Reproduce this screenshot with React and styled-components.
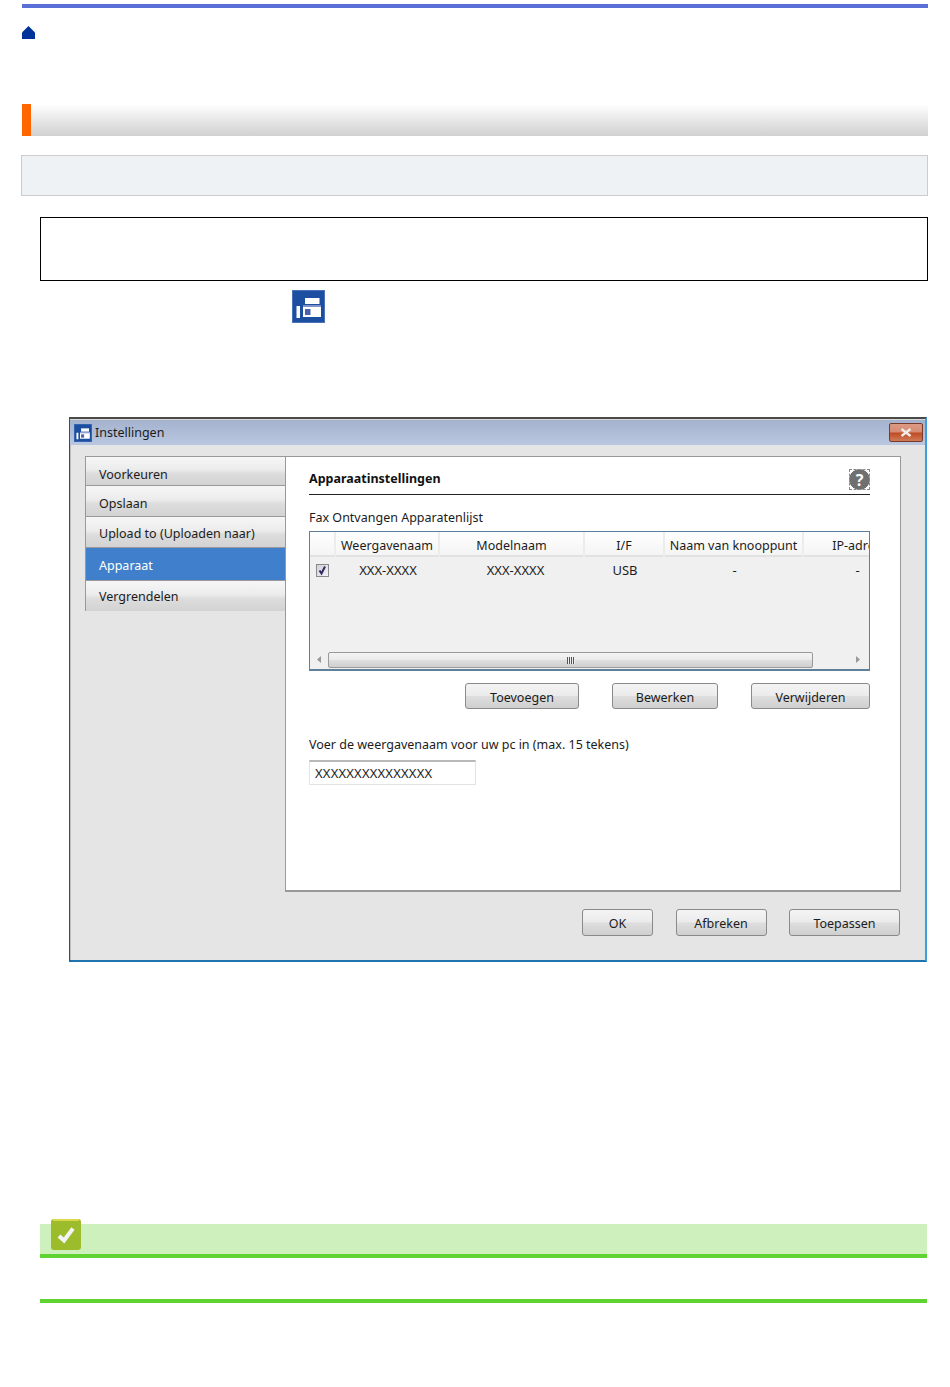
import React from 'react';
import styled, { createGlobalStyle } from 'styled-components';

const GlobalStyle = createGlobalStyle`
  html, body {
    margin: 0;
    padding: 0;
    background: #fff;
  }
  body {
    font-family: "Noto Sans", "Liberation Sans", sans-serif;
    font-size: 12.5px;
    color: #1c1c1c;
  }
`;

const COLUMNS = '26px 104px 145px 80px 139px 107px';
const AERO = 'linear-gradient(#f4f4f4, #ebebeb 48%, #dedede 52%, #cfcfcf)';

const Page = styled.div`
  width: 906px;
  min-height: 1383px;
  padding: 4px 22px 0;
`;

const TopBar = styled.div`
  height: 4px;
  background: #5b6fd8;
`;

const HomeLink = styled.a`
  display: block;
  width: 13px;
  height: 13px;
  margin-top: 18px;
  svg { display: block; }
`;

const Heading = styled.div`
  height: 32px;
  margin-top: 65px;
  border-left: 9px solid #ff6600;
  background: linear-gradient(#fff, #f1f1f1 30%, #d0d0d0);
`;

const Intro = styled.div`
  height: 39px;
  margin: 19px 0 0 -1px;
  border: 1px solid #ccc;
  background: #eff2f5;
`;

const Notice = styled.div`
  height: 62px;
  margin: 21px 0 0 18px;
  border: 1px solid #000;
`;

const StepIcon = styled.div`
  width: 33px;
  height: 33px;
  margin: 9px 0 0 270px;
  svg { display: block; }
`;

const Dialog = styled.div`
  box-sizing: border-box;
  display: flex;
  flex-direction: column;
  width: 858px;
  height: 545px;
  margin: 94px 0 0 47px;
  border-top: 2px solid #4a4a48;
  border-left: 1px solid #4a4a4a;
  border-right: 2px solid #3f9fdc;
  border-bottom: 2px solid #1f74ad;
  background: #e5e5e5;
`;

const TitleBar = styled.div`
  display: flex;
  align-items: center;
  flex: none;
  height: 25px;
  padding: 0 2px 0 4px;
  border-top: 1px solid #d8d8d8;
  background: linear-gradient(#a4b2ce, #b9c7e0);
`;

const TitleIcon = styled.div`
  width: 18px;
  height: 18px;
  svg { display: block; }
`;

const TitleText = styled.span`
  margin-left: 3px;
  flex: 1;
  line-height: 16px;
`;

const CloseButton = styled.div`
  box-sizing: border-box;
  display: flex;
  align-items: center;
  justify-content: center;
  width: 34px;
  height: 19px;
  border: 1px solid #7a3a2a;
  border-radius: 2px;
  background: linear-gradient(#dc9a84, #d58c73 48%, #bd4a22 52%, #cf7b58);
  svg { display: block; }
`;

const DialogBody = styled.div`
  flex: 1;
  padding: 11px 24px 0 14px;
  border-left: 1px solid #bdbdbd;
`;

const MainRow = styled.div`
  display: flex;
  height: 436px;
`;

const Sidebar = styled.div`
  box-sizing: border-box;
  flex: none;
  width: 200px;
  height: 155px;
  border: 1px solid #999;
  border-right: none;
`;

const SideItem = styled.div`
  box-sizing: border-box;
  height: ${(p) => p.$height}px;
  padding: ${(p) => p.$top}px 0 0 13px;
  line-height: 16px;
  white-space: nowrap;
  border-bottom: ${(p) => (p.$last ? 'none' : '1px solid #999')};
  background: ${(p) => (p.$active ? '#3f7fcb' : 'linear-gradient(#f6f6f6, #ececec 45%, #dcdcdc 60%, #d3d3d3)')};
  color: ${(p) => (p.$active ? '#fff' : '#1c1c1c')};
`;

const Panel = styled.div`
  box-sizing: border-box;
  flex: 1;
  min-width: 0;
  padding: 0 30px 0 23px;
  background: #fff;
  border: 1px solid #999;
  border-bottom-width: 2px;
`;

const PanelHeader = styled.div`
  box-sizing: border-box;
  display: flex;
  align-items: center;
  justify-content: space-between;
  height: 38px;
  padding-top: 8px;
  border-bottom: 1px solid #222;
`;

const PanelTitle = styled.span`
  margin-bottom: 2px;
  font-weight: 700;
  color: #111;
`;

const HelpIcon = styled.div`
  box-sizing: border-box;
  display: flex;
  align-items: center;
  justify-content: center;
  width: 21px;
  height: 21px;
  background: radial-gradient(circle closest-side, #707070 96%, transparent);
  outline: 1px dashed #8a8a8a;
  outline-offset: -1px;
  color: #fff;
  font-size: 16px;
  font-weight: 700;
  line-height: 1;
`;

const FieldLabel = styled.div`
  margin-top: ${(p) => p.$top}px;
  line-height: 16px;
`;

const DeviceList = styled.div`
  box-sizing: border-box;
  display: flex;
  flex-direction: column;
  height: 140px;
  margin-top: 5px;
  border: 1px solid #5f7f9a;
  border-bottom-width: 2px;
  overflow: hidden;
`;

const ListHead = styled.div`
  box-sizing: border-box;
  display: grid;
  grid-template-columns: ${COLUMNS};
  height: 25px;
  flex: none;
  background: linear-gradient(#fff, #f4f4f4);
  border-bottom: 2px solid #e2e2e2;
`;

const HeadCell = styled.div`
  box-sizing: border-box;
  padding-top: 1px;
  text-align: center;
  white-space: nowrap;
  line-height: 25px;
  border-right: 2px solid #ececec;
`;

const ListBody = styled.div`
  flex: 1;
  background: #f0f0f0;
`;

const ListRow = styled.div`
  display: grid;
  grid-template-columns: ${COLUMNS};
  height: 26px;
  align-items: center;
`;

const RowCell = styled.div`
  padding-left: ${(p) => p.$shift || 0}px;
  text-align: center;
  white-space: nowrap;
  font-size: 13px;
`;

const CheckBox = styled.div`
  box-sizing: border-box;
  width: 13px;
  height: 13px;
  margin-left: 6px;
  border: 1px solid #8a8a8a;
  background: linear-gradient(135deg, #d0d0dc, #f2f2f6);
  svg { display: block; }
`;

const ScrollBar = styled.div`
  display: flex;
  align-items: flex-start;
  height: 17px;
  flex: none;
  background: #f0f0f0;
`;

const ScrollArrow = styled.div`
  box-sizing: border-box;
  display: flex;
  align-items: center;
  justify-content: ${(p) => (p.$end ? 'flex-end' : 'center')};
  width: ${(p) => p.$width}px;
  height: 15px;
  padding-right: ${(p) => (p.$end ? 8 : 0)}px;
  svg { display: block; }
`;

const ScrollThumb = styled.div`
  box-sizing: border-box;
  display: flex;
  align-items: center;
  justify-content: center;
  width: 485px;
  height: 16px;
  border: 1px solid #9a9a9a;
  border-radius: 2px;
  background: ${AERO};
`;

const Grip = styled.div`
  width: 8px;
  height: 7px;
  background: repeating-linear-gradient(90deg, #555 0 1px, #eee 1px 2px);
`;

const ActionRow = styled.div`
  display: flex;
  justify-content: flex-end;
  gap: 33px;
  margin-top: 12px;
`;

const Button = styled.div`
  box-sizing: border-box;
  display: flex;
  align-items: center;
  justify-content: center;
  width: ${(p) => p.$width}px;
  height: ${(p) => p.$height}px;
  padding-top: 2px;
  border: 1px solid #8a8a8a;
  border-radius: 3px;
  background: ${AERO};
`;

const NameInput = styled.div`
  box-sizing: border-box;
  width: 167px;
  height: 25px;
  margin-top: 7px;
  padding-left: 5px;
  font-size: 13px;
  letter-spacing: 0.2px;
  line-height: 23px;
  border: 1px solid #e3e3e3;
  border-top: 2px solid #b8b8b8;
`;

const DialogFooter = styled.div`
  display: flex;
  justify-content: flex-end;
  gap: 22.5px;
  padding: 17px 1px 0 0;
`;

const NoteBar = styled.div`
  position: relative;
  width: 887px;
  height: 30px;
  margin: 262px 0 0 18px;
  background: #cdf0bd;
  border-bottom: 4px solid #5fd331;
`;

const NoteBadge = styled.div`
  position: absolute;
  left: 10px;
  top: -5px;
  svg { display: block; }
`;

const NoteEnd = styled.div`
  width: 887px;
  height: 4px;
  margin: 41px 0 0 18px;
  background: #5fd331;
`;

const PrinterGlyph = () => (
  <svg width="100%" height="100%" viewBox="0 0 33 33">
    <rect width="33" height="33" fill="#1d4fa0" />
    <rect x="0.5" y="0.5" width="32" height="32" fill="none" stroke="#4a74b8" />
    <rect x="4.5" y="16" width="3.5" height="12" fill="#fff" />
    <rect x="13" y="8" width="14.5" height="6" fill="#fff" />
    <rect x="11" y="15" width="18" height="12" fill="#fff" />
    <rect x="11" y="15" width="18" height="2" fill="#7f93c8" />
    <rect x="13" y="19" width="5.5" height="6" fill="#4a62ab" />
  </svg>
);

const TABLE_ROW = ['XXX-XXXX', 'XXX-XXXX', 'USB', '-', '-'];
const TABLE_HEAD = ['', 'Weergavenaam', 'Modelnaam', 'I/F', 'Naam van knooppunt', 'IP-adres'];

const App = () => {
  return (
    <Page>
      <GlobalStyle />
      <TopBar />
      <HomeLink>
        <svg width="13" height="13" viewBox="0 0 13 13">
          <polygon points="6.5,0 13,6.5 13,13 0,13 0,6.5" fill="#003399" />
        </svg>
      </HomeLink>
      <Heading />
      <Intro />
      <Notice />
      <StepIcon>
        <PrinterGlyph />
      </StepIcon>

      <Dialog>
        <TitleBar>
          <TitleIcon>
            <PrinterGlyph />
          </TitleIcon>
          <TitleText>Instellingen</TitleText>
          <CloseButton>
            <svg width="12" height="9" viewBox="0 0 12 9">
              <path d="M1.5 1 L10.5 8 M10.5 1 L1.5 8" stroke="#f2ece8" strokeWidth="2.4" />
            </svg>
          </CloseButton>
        </TitleBar>
        <DialogBody>
          <MainRow>
            <Sidebar>
              <SideItem $height={29} $top={10}>Voorkeuren</SideItem>
              <SideItem $height={31} $top={10}>Opslaan</SideItem>
              <SideItem $height={31} $top={9}>Upload to (Uploaden naar)</SideItem>
              <SideItem $height={33} $top={10} $active>Apparaat</SideItem>
              <SideItem $height={30} $top={8} $last>Vergrendelen</SideItem>
            </Sidebar>
            <Panel>
              <PanelHeader>
                <PanelTitle>Apparaatinstellingen</PanelTitle>
                <HelpIcon>?</HelpIcon>
              </PanelHeader>
              <FieldLabel $top={15}>Fax Ontvangen Apparatenlijst</FieldLabel>
              <DeviceList>
                <ListHead>
                  {TABLE_HEAD.map((label) => (
                    <HeadCell key={label}>{label}</HeadCell>
                  ))}
                </ListHead>
                <ListBody>
                  <ListRow>
                    <CheckBox>
                      <svg width="11" height="11" viewBox="0 0 11 11">
                        <path d="M2.5 5.5 L4.5 8.5 L8 1.5" fill="none" stroke="#33295f" strokeWidth="2" />
                      </svg>
                    </CheckBox>
                    {TABLE_ROW.map((value, i) => (
                      <RowCell key={i} $shift={i === 1 ? 6 : 0}>{value}</RowCell>
                    ))}
                  </ListRow>
                </ListBody>
                <ScrollBar>
                  <ScrollArrow $width={18}>
                    <svg width="5" height="7" viewBox="0 0 5 7">
                      <polygon points="4,0 4,7 0,3.5" fill="#999" />
                    </svg>
                  </ScrollArrow>
                  <ScrollThumb>
                    <Grip />
                  </ScrollThumb>
                  <ScrollArrow $width={56} $end>
                    <svg width="5" height="7" viewBox="0 0 5 7">
                      <polygon points="0,0 0,7 4,3.5" fill="#999" />
                    </svg>
                  </ScrollArrow>
                </ScrollBar>
              </DeviceList>
              <ActionRow>
                <Button $width={114} $height={26}>Toevoegen</Button>
                <Button $width={106} $height={26}>Bewerken</Button>
                <Button $width={119} $height={26}>Verwijderen</Button>
              </ActionRow>
              <FieldLabel $top={28}>Voer de weergavenaam voor uw pc in (max. 15 tekens)</FieldLabel>
              <NameInput>XXXXXXXXXXXXXXX</NameInput>
            </Panel>
          </MainRow>
          <DialogFooter>
            <Button $width={71} $height={27}>OK</Button>
            <Button $width={91} $height={27}>Afbreken</Button>
            <Button $width={111} $height={27}>Toepassen</Button>
          </DialogFooter>
        </DialogBody>
      </Dialog>

      <NoteBar>
        <NoteBadge>
          <svg width="32" height="32" viewBox="0 0 32 32">
            <rect x="1" y="0" width="30" height="31" rx="3" fill="#9cbc2c" />
            <rect x="3" y="0" width="26" height="2" fill="#d8d84a" />
            <path d="M9 17 L14 21.5 L23 9.5" fill="none" stroke="#f4f4f4" strokeWidth="4" />
          </svg>
        </NoteBadge>
      </NoteBar>
      <NoteEnd />
    </Page>
  );
};

export default App;
